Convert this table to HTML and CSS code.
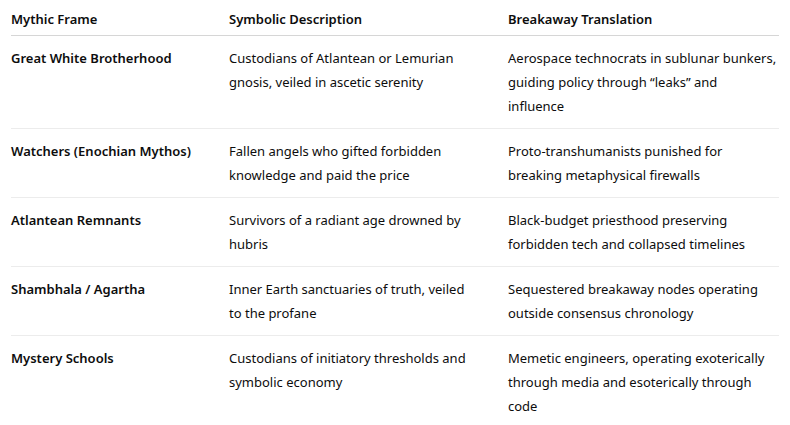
FILE: index.html
```html
<!DOCTYPE html>
<html>
<head>
<meta charset="utf-8">
<link rel="stylesheet" href="styles.css">
</head>
<body>
<table class="frames">
  <colgroup>
    <col class="c1"><col class="c2"><col class="c3">
  </colgroup>
  <thead>
    <tr><th>Mythic Frame</th><th>Symbolic Description</th><th>Breakaway Translation</th></tr>
  </thead>
  <tbody>
    <tr><td class="name">Great White Brotherhood</td><td>Custodians of Atlantean or Lemurian gnosis, veiled in ascetic serenity</td><td>Aerospace technocrats in sublunar bunkers, guiding policy through “leaks” and influence</td></tr>
    <tr><td class="name">Watchers (Enochian Mythos)</td><td>Fallen angels who gifted forbidden knowledge and paid the price</td><td>Proto-transhumanists punished for breaking metaphysical firewalls</td></tr>
    <tr><td class="name">Atlantean Remnants</td><td>Survivors of a radiant age drowned by hubris</td><td>Black-budget priesthood preserving forbidden tech and collapsed timelines</td></tr>
    <tr><td class="name">Shambhala / Agartha</td><td>Inner Earth sanctuaries of truth, veiled to the profane</td><td>Sequestered breakaway nodes operating outside consensus chronology</td></tr>
    <tr><td class="name">Mystery Schools</td><td>Custodians of initiatory thresholds and symbolic economy</td><td>Memetic engineers, operating exoterically through media and esoterically through code</td></tr>
  </tbody>
</table>
</body>
</html>
```
FILE: styles.css
```css
html, body {
  margin: 0;
  padding: 0;
  background: #ffffff;
}
body {
  padding: 0 11px;
  font-family: "Noto Sans", "Open Sans", sans-serif;
  font-size: 13px;
  line-height: 24px;
  color: #0d0d0d;
}
.frames {
  width: 768px;
  border-collapse: collapse;
  table-layout: fixed;
}
.c1 { width: 202px; }
.c2 { width: 279px; }
.c3 { width: 287px; }
.frames th {
  text-align: left;
  font-weight: 600;
  padding: 7px 16px 4px 16px;
  border-bottom: 1px solid #d6d6d6;
  vertical-align: top;
}
.frames td {
  padding: 10px 16px;
  vertical-align: top;
  border-bottom: 1px solid #ececec;
}
.frames th:first-child, .frames td:first-child { padding-left: 0; }
.frames th:last-child, .frames td:last-child { padding-right: 2.5px; }
.frames tbody tr:last-child td { border-bottom: none; }
.frames td.name { font-weight: 600; }
```
